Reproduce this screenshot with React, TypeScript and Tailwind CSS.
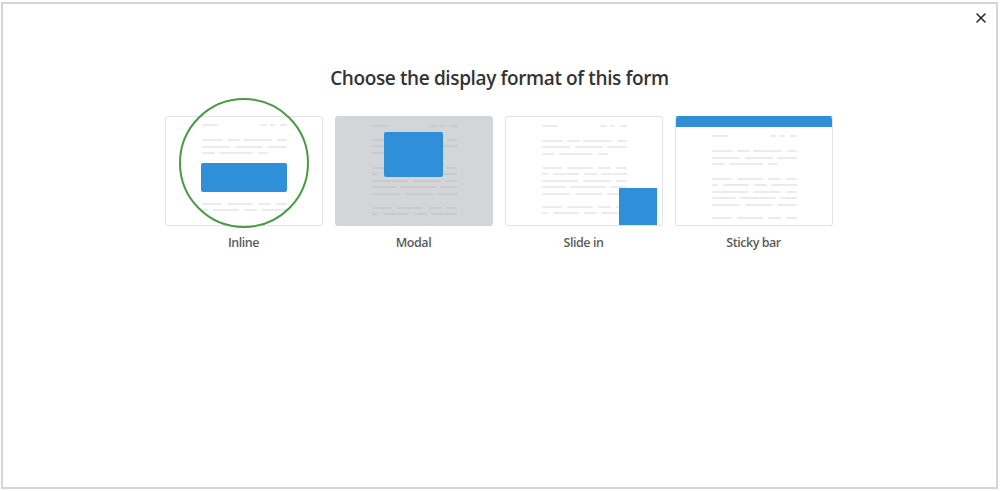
import React from 'react';

type Seg = [number, number];

const BLUE = '#2f8fd9';

// 段落线条样式（相对于缩略图内部坐标）
const P: Record<string, Seg[]> = {
  a: [[36, 57], [61, 74], [77, 106], [111, 121]],
  b: [[36, 64], [69, 97], [101, 121]],
  c: [[36, 49], [53, 87], [92, 102]],
  d: [[36, 56], [61, 87], [92, 105], [110, 121]],
  e: [[36, 42], [47, 73], [78, 91], [95, 121]],
  f: [[36, 72], [77, 105], [110, 121]],
  g: [[36, 60], [64, 100], [104, 121]],
};

const HEAD_L: Seg[] = [[36, 52]];
const HEAD_R: Seg[] = [[94, 101], [104, 109], [114, 121]];

function Lines({ rows, color }: { rows: [number, Seg[]][]; color: string }) {
  return (
    <>
      {rows.map(([y, segs], i) =>
        segs.map(([x1, x2], j) => (
          <rect key={`${i}-${j}`} x={x1} y={y} width={x2 - x1} height={2} rx={1} fill={color} />
        ))
      )}
    </>
  );
}

function Thumb({ kind }: { kind: 'inline' | 'modal' | 'slide' | 'sticky' }) {
  const line = kind === 'modal' ? '#c8cbce' : '#eaebed';

  if (kind === 'inline') {
    return (
      <svg width="156" height="108" viewBox="0 0 156 108">
        <Lines
          color={line}
          rows={[
            [7, HEAD_L], [7, HEAD_R],
            [22, P.a], [29, P.b], [35, P.c],
            [86, P.d], [92, P.e],
          ]}
        />
        <rect x="35" y="46" width="86" height="29" rx="2" fill={BLUE} />
      </svg>
    );
  }

  if (kind === 'modal') {
    return (
      <svg width="156" height="108" viewBox="0 0 156 108">
        <Lines
          color={line}
          rows={[
            [8, HEAD_L], [8, HEAD_R],
            [22, P.a], [28, P.b], [35, P.c],
            [50, P.d], [56, P.e], [63, P.f], [69, P.g], [76, P.b],
            [90, P.d], [96, P.e],
          ]}
        />
        <rect x="48" y="15" width="59" height="45" rx="2" fill={BLUE} />
      </svg>
    );
  }

  if (kind === 'slide') {
    return (
      <svg width="156" height="108" viewBox="0 0 156 108">
        <Lines
          color={line}
          rows={[
            [8, HEAD_L], [8, HEAD_R],
            [23, P.a], [29, P.b], [36, P.c],
            [50, P.d], [56, P.e], [63, P.f], [69, P.g], [76, P.b],
            [89, P.d], [95, P.e],
          ]}
        />
        <rect x="113" y="71" width="38" height="37" fill={BLUE} />
      </svg>
    );
  }

  return (
    <svg width="156" height="108" viewBox="0 0 156 108">
      <rect x="0" y="0" width="156" height="10" fill={BLUE} />
      <Lines
        color={line}
        rows={[
          [18, HEAD_L], [18, HEAD_R],
          [33, P.a], [40, P.b], [46, P.c],
          [61, P.d], [67, P.e], [74, P.f], [80, P.g], [87, P.b],
          [100, P.d],
        ]}
      />
    </svg>
  );
}

const formats: { id: 'inline' | 'modal' | 'slide' | 'sticky'; label: string }[] = [
  { id: 'inline', label: 'Inline' },
  { id: 'modal', label: 'Modal' },
  { id: 'slide', label: 'Slide in' },
  { id: 'sticky', label: 'Sticky bar' },
];

export default function App() {
  const selected = 'inline';

  return (
    <div
      className="w-[1000px] h-[491px] bg-white pt-[2px] pl-px overflow-hidden"
      style={{ fontFamily: '"Open Sans", "Noto Sans", sans-serif' }}
    >
      <div className="relative w-[997px] h-[487px] border-2 border-[#d5d5d5] bg-white flex flex-col items-center">
        {/* 关闭按钮 */}
        <button className="absolute top-[8px] right-[9px] w-3 h-3 flex items-center justify-center text-[#222]">
          <svg width="12" height="12" viewBox="0 0 12 12">
            <path d="M2 2 L10 10 M10 2 L2 10" stroke="currentColor" strokeWidth="1.5" strokeLinecap="round" />
          </svg>
        </button>

        <h1 className="mt-[61px] text-[19px] leading-[26px] tracking-[-0.38px] text-[#333]" style={{ fontWeight: 600 }}>
          Choose the display format of this form
        </h1>

        <div className="mt-[25px] -ml-[2px] flex gap-3">
          {formats.map((f) => (
            <div key={f.id} className="relative flex flex-col items-center w-[158px]">
              <div
                className={`w-[158px] h-[110px] rounded-[3px] border overflow-hidden ${
                  f.id === 'modal'
                    ? 'bg-[#d3d5d8] border-[#d3d5d8]'
                    : f.id === 'sticky'
                    ? 'bg-white border-[#e2e3e5] border-t-[#2f8fd9]'
                    : 'bg-white border-[#e2e3e5]'
                }`}
              >
                <Thumb kind={f.id} />
              </div>
              <span className="mt-[8px] text-[12.5px] leading-[18px] tracking-[-0.45px] text-[#5c5c5c]" style={{ fontWeight: 600 }}>
                {f.label}
              </span>
              {selected === f.id && (
                <div className="absolute left-[14px] top-[-18px] w-[130px] h-[130px] rounded-full border-[2.5px] border-[#4a9a44] pointer-events-none" />
              )}
            </div>
          ))}
        </div>
      </div>
    </div>
  );
}
